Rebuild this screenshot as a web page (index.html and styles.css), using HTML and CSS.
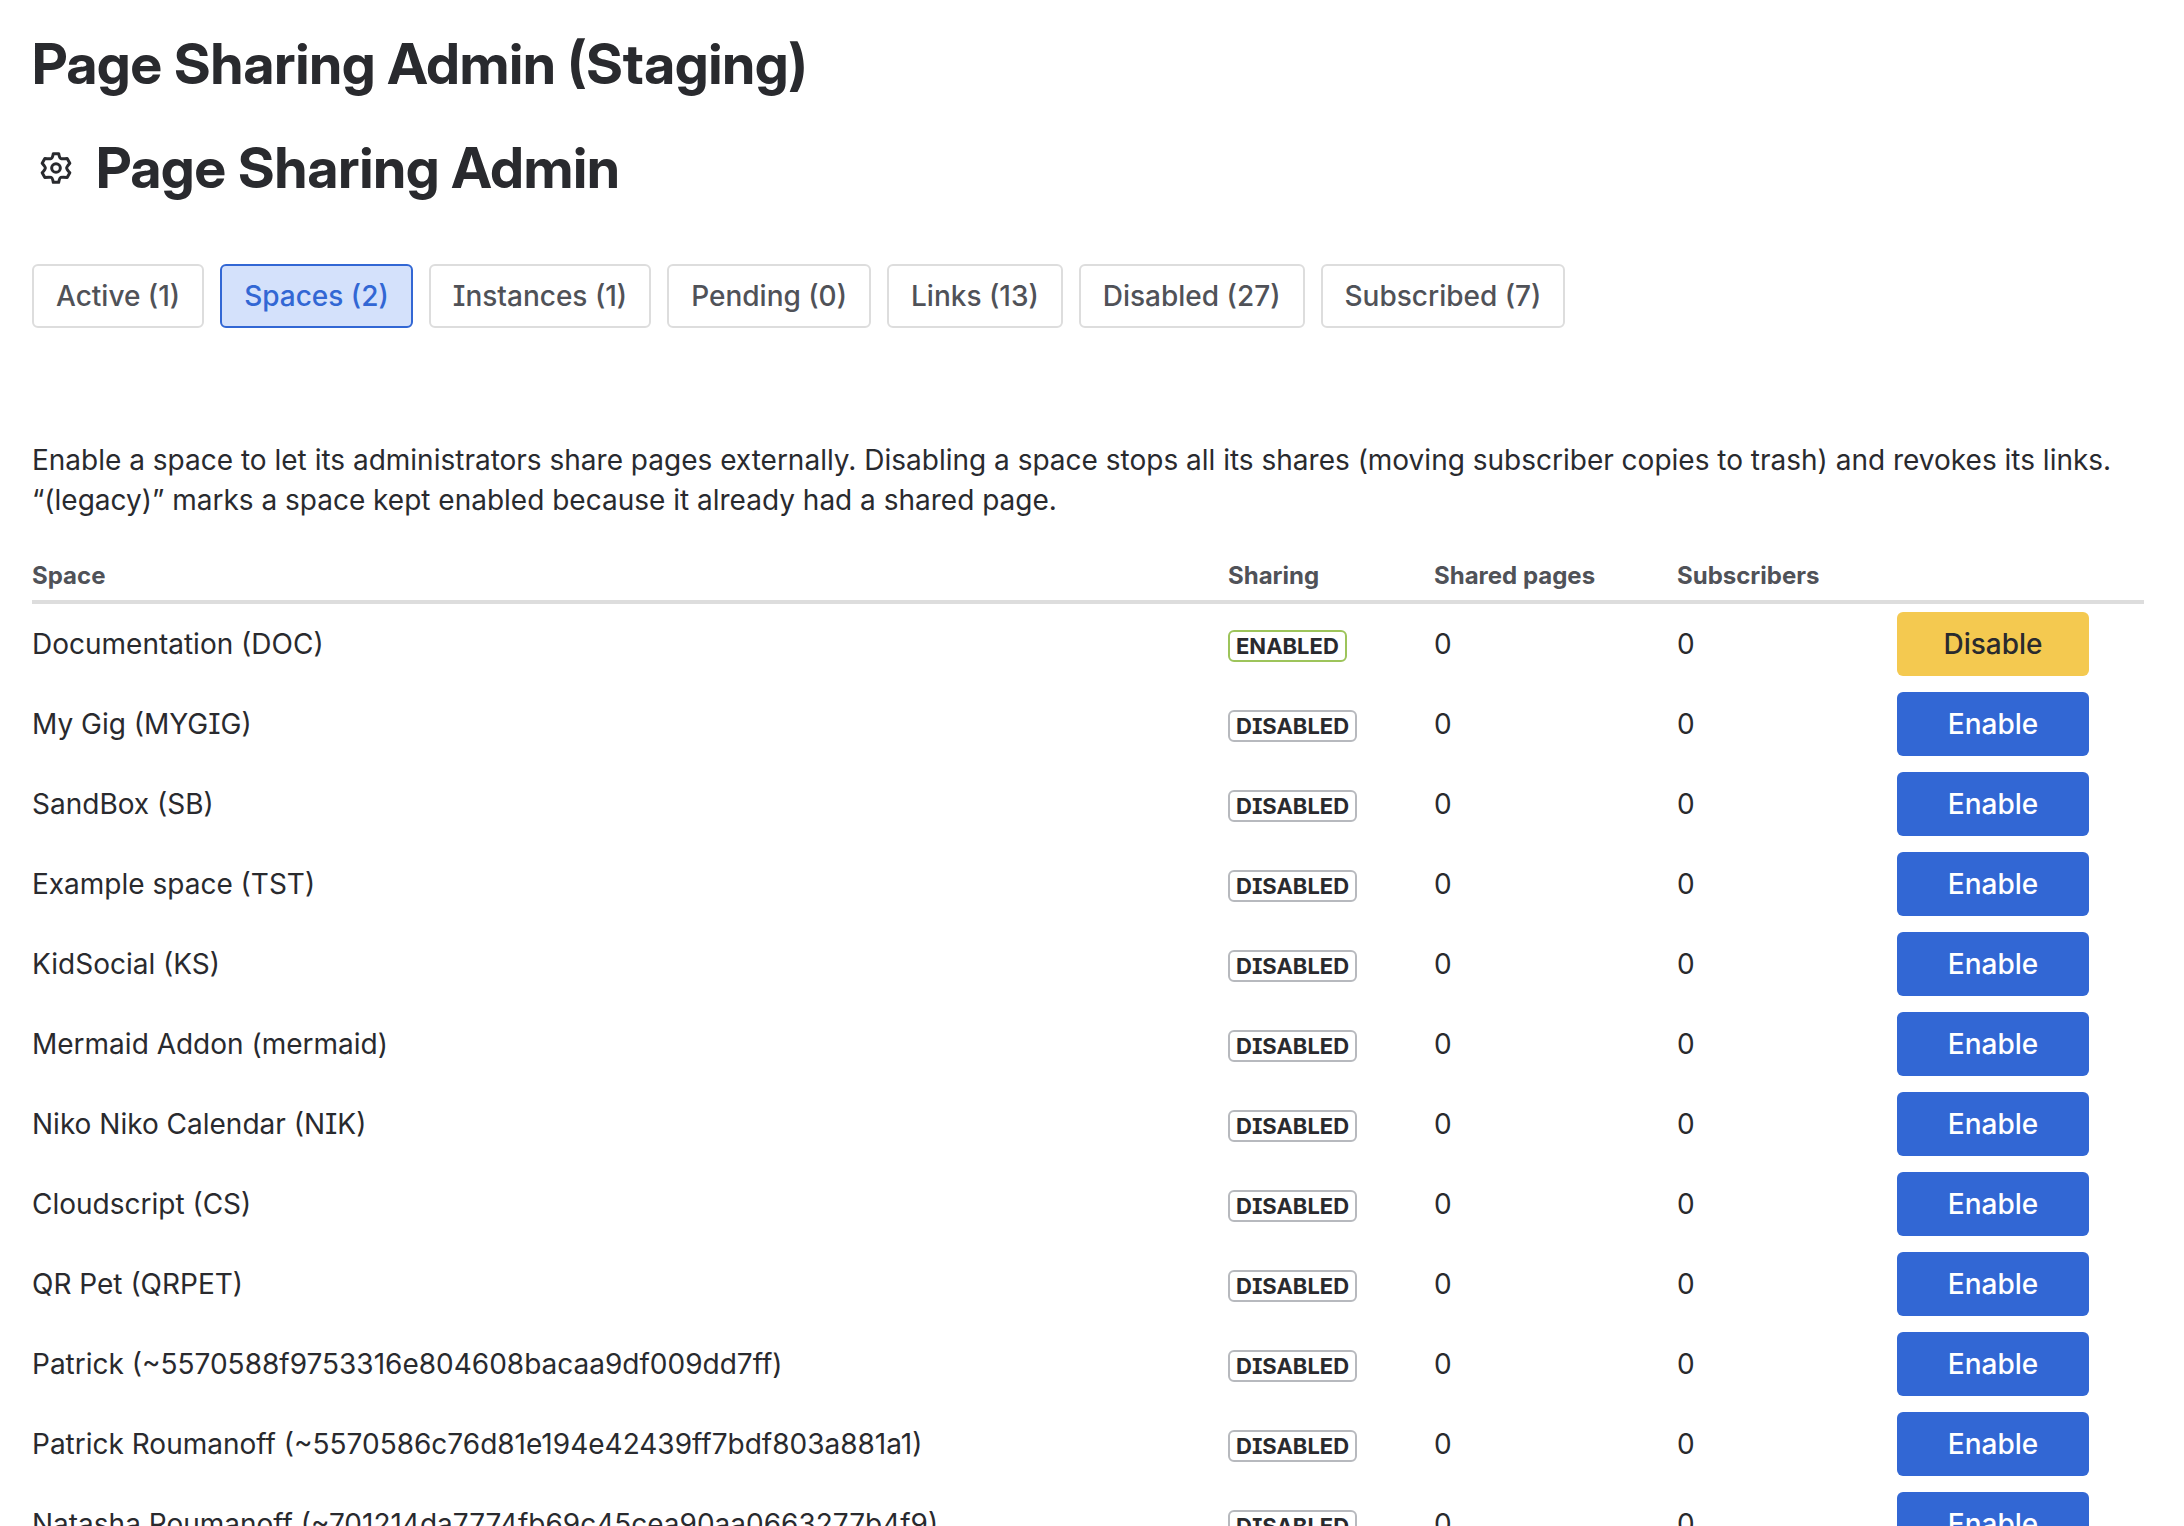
FILE: index.html
```html
<!DOCTYPE html>
<html lang="en">
<head>
    <meta charset="UTF-8">
    <meta name="viewport" content="width=device-width, initial-scale=1.0">
    <title>Page Sharing Admin (Staging)</title>
    <link rel="stylesheet" href="styles.css">
</head>
<body>
    <div class="container">
        <h1>Page Sharing Admin (Staging)</h1>
        <div class="app-title">
            <svg class="gear" viewBox="0 0 96 96" aria-hidden="true">
                <path d="M40 5 H56 Q59 20 64 20 Q68 21 81.500 19.600 L89.500 33.400 Q80 44 80 48 Q80 52 89.500 62.600 L81.500 76.400 Q68 75 64 76 Q59 76 56 91 H40 Q37 76 32 76 Q28 75 14.500 76.400 L6.500 62.600 Q16 52 16 48 Q16 44 6.500 33.400 L14.500 19.600 Q28 21 32 20 Q37 20 40 5 Z"/>
                <circle cx="48" cy="48" r="13"/>
            </svg>
            <h2>Page Sharing Admin</h2>
        </div>

        <div class="tabs">
            <button class="tab">Active (1)</button>
            <button class="tab selected">Spaces (2)</button>
            <button class="tab">Instances (1)</button>
            <button class="tab">Pending (0)</button>
            <button class="tab">Links (13)</button>
            <button class="tab">Disabled (27)</button>
            <button class="tab">Subscribed (7)</button>
        </div>

        <p class="intro">Enable a space to let its administrators share pages externally. Disabling a space stops all its shares (moving subscriber copies to trash) and revokes its links. “(legacy)” marks a space kept enabled because it already had a shared page.</p>

        <table class="spaces">
            <thead>
                <tr>
                    <th>Space</th>
                    <th class="col-sharing">Sharing</th>
                    <th class="col-pages">Shared pages</th>
                    <th class="col-subscribers">Subscribers</th>
                    <th class="col-action"></th>
                </tr>
            </thead>
            <tbody id="spacesList"></tbody>
        </table>
    </div>

    <script>
        const spaces = [
            { name: 'Documentation (DOC)', enabled: true },
            { name: 'My Gig (MYGIG)', enabled: false },
            { name: 'SandBox (SB)', enabled: false },
            { name: 'Example space (TST)', enabled: false },
            { name: 'KidSocial (KS)', enabled: false },
            { name: 'Mermaid Addon (mermaid)', enabled: false },
            { name: 'Niko Niko Calendar (NIK)', enabled: false },
            { name: 'Cloudscript (CS)', enabled: false },
            { name: 'QR Pet (QRPET)', enabled: false },
            { name: 'Patrick (~5570588f9753316e804608bacaa9df009dd7ff)', enabled: false },
            { name: 'Patrick Roumanoff (~5570586c76d81e194e42439ff7bdf803a881a1)', enabled: false },
            { name: 'Natasha Roumanoff (~701214da7774fb69c45cea90aa0663277b4f9)', enabled: false }
        ];

        function displaySpaces() {
            const list = document.getElementById('spacesList');

            spaces.forEach(space => {
                const tr = document.createElement('tr');
                tr.innerHTML = `
                    <td>${space.name}</td>
                    <td><span class="badge ${space.enabled ? 'on' : ''}">${space.enabled ? 'ENABLED' : 'DISABLED'}</span></td>
                    <td>0</td>
                    <td>0</td>
                    <td><button class="action ${space.enabled ? 'warning' : ''}">${space.enabled ? 'Disable' : 'Enable'}</button></td>
                `;
                list.appendChild(tr);
            });
        }

        displaySpaces();
    </script>
</body>
</html>
```

FILE: styles.css
```css
* {
    box-sizing: border-box;
}
html {
    height: 100%;
    overflow: hidden;
}
body {
    height: 100%;
    margin: 0;
    overflow: hidden;
    background: #fff;
    color: #292a2e;
    font-family: Inter, "Liberation Sans", sans-serif;
    font-size: 28px;
    line-height: 40px;
    font-feature-settings: "cv08";
}
.container {
    padding: 32px 40px 0 32px;
}
h1, h2 {
    margin: 0;
    font-family: "Inter Display", Inter, "Liberation Sans", sans-serif;
    font-size: 56px;
    line-height: 64px;
    font-weight: 700;
    font-variation-settings: "opsz" 32;
}
.app-title {
    display: flex;
    align-items: center;
    gap: 16px;
    margin-top: 40px;
}
.gear {
    width: 48px;
    height: 32px;
    fill: none;
    stroke: #292a2e;
    stroke-width: 9;
    stroke-linejoin: round;
}
.tabs {
    display: flex;
    gap: 16px;
    margin-top: 64px;
}
button {
    height: 64px;
    border-radius: 6px;
    font: inherit;
    font-weight: 500;
    font-feature-settings: inherit;
    cursor: pointer;
}
.tab {
    padding: 0 22px;
    border: 2px solid #dddddd;
    background: #fff;
    color: #505258;
}
.tab.selected {
    border-color: #3267d4;
    background: #d4e1fb;
    color: #3267d4;
}
.intro {
    margin: 112px 0 32px;
}
.spaces {
    width: 100%;
    border-collapse: separate;
    border-spacing: 0;
    table-layout: fixed;
}
th {
    padding: 8px 16px;
    border-bottom: 4px solid #dddddd;
    color: #505258;
    font-size: 24px;
    line-height: 32px;
    font-weight: 700;
    text-align: left;
}
td {
    height: 80px;
    padding: 8px 16px;
    white-space: nowrap;
}
th:first-child, td:first-child {
    padding-left: 0;
}
.col-sharing {
    width: 206px;
}
.col-pages {
    width: 243px;
}
.col-subscribers {
    width: 220px;
}
.col-action {
    width: 263px;
}
.badge {
    display: inline-block;
    height: 32px;
    padding: 0 6px;
    border: 2px solid #b7b9be;
    border-radius: 6px;
    font-size: 22px;
    line-height: 28px;
    font-weight: 700;
}
.badge.on {
    border-color: #9dc45b;
}
.action {
    display: block;
    width: 192px;
    padding: 0;
    border: none;
    background: #3267d4;
    color: #fff;
}
.action.warning {
    background: #f4c950;
    color: #292a2e;
}
```
